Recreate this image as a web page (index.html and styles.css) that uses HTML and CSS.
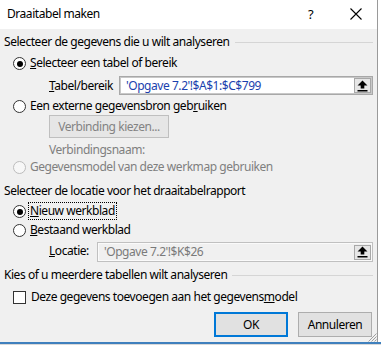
FILE: index.html
```html
<!DOCTYPE html>
<html>
<head>
<meta charset="utf-8">
<link rel="stylesheet" href="styles.css">
</head>
<body>
<div class="dialog">
  <div class="titlebar">
    <span class="title">Draaitabel maken</span>
    <span class="tb-help">?</span>
    <span class="tb-close">
      <svg width="12" height="12" viewBox="0 0 12 12"><path d="M0.5 0.5 L11.5 11.5 M11.5 0.5 L0.5 11.5" stroke="#000" stroke-width="1.1"/></svg>
    </span>
  </div>
  <div class="body">
    <div class="header h1"><span>Selecteer de gegevens die u wilt analyseren</span><span class="rule"></span></div>
    <div class="opt r1"><span class="radio checked"></span><span><u>S</u>electeer een tabel of bereik</span></div>
    <div class="field f1">
      <span class="flabel"><u>T</u>abel/bereik</span>
      <div class="input in1"><span class="val">'Opgave 7.2'!$A$1:$C$799</span><span class="pick"><svg width="11" height="12" viewBox="0 0 11 12"><path d="M5.5 0.5 L10.5 5.5 L7.3 5.5 L7.3 8.5 L3.7 8.5 L3.7 5.5 L0.5 5.5 Z" fill="#000"/><rect x="0.5" y="10" width="10" height="1.5" fill="#000"/></svg></span></div>
    </div>
    <div class="opt r2"><span class="radio"></span><span>Een externe gegevensbron geb<u>r</u>uiken</span></div>
    <div class="btnrow"><span class="btn disabled">Verbinding kiezen...</span></div>
    <div class="sub dis">Verbindingsnaam:</div>
    <div class="opt r3 dis"><span class="radio disabled"></span><span>Gegevensmodel van deze werkmap gebruiken</span></div>
    <div class="header h2"><span>Selecteer de locatie voor het draaitabelrapport</span></div>
    <div class="opt r4"><span class="radio checked"></span><span class="focus"><u>N</u>ieuw werkblad</span></div>
    <div class="opt r5"><span class="radio"></span><span><u>B</u>estaand werkblad</span></div>
    <div class="field f2">
      <span class="flabel"><u>L</u>ocatie:</span>
      <div class="input in2 disabled"><span class="val">'Opgave 7.2'!$K$26</span><span class="pick"><svg width="11" height="12" viewBox="0 0 11 12"><path d="M5.5 0.5 L10.5 5.5 L7.3 5.5 L7.3 8.5 L3.7 8.5 L3.7 5.5 L0.5 5.5 Z" fill="#000"/><rect x="0.5" y="10" width="10" height="1.5" fill="#000"/></svg></span></div>
    </div>
    <div class="header h3"><span>Kies of u meerdere tabellen wilt analyseren</span><span class="rule"></span></div>
    <div class="opt r6"><span class="check"></span><span>Deze gegevens toevoegen aan het gegevens<u>m</u>odel</span></div>
    <div class="actions">
      <span class="btn primary">OK</span>
      <span class="btn">Annuleren</span>
    </div>
  </div>
  <div class="grip"><svg width="9" height="9" viewBox="0 0 9 9"><path d="M8.5 0.5 L0.5 8.5 M8.5 3.5 L3.5 8.5 M8.5 6.5 L6.5 8.5" stroke="#a0a0a0" stroke-width="1"/></svg></div>
</div>
<div class="taskbar"></div>
</body>
</html>
```
FILE: styles.css
```css
html, body {
  margin: 0;
  padding: 0;
  background: #ffffff;
  width: 381px;
  height: 345px;
  overflow: hidden;
}
body {
  font-family: "Noto Sans", "Open Sans", sans-serif;
  font-size: 12px;
  line-height: 16px;
  letter-spacing: -0.45px;
  color: #000;
}
.dialog {
  position: relative;
  width: 377px;
  height: 342px;
  background: #f0f0f0;
  border-right: 1px solid #9a9a9a;
  display: flex;
  flex-direction: column;
}
.titlebar {
  height: 29px;
  background: #fff;
  display: flex;
  align-items: center;
  padding-left: 7px;
}
.title { flex: 1; margin-top: -2px; }
.tb-help { width: 12px; margin-right: 30px; font-size: 13px; margin-top: -2px; }
.tb-close { width: 12px; margin-right: 15px; display: flex; margin-top: -1px; }

.body {
  display: flex;
  flex-direction: column;
  padding-left: 4px;
  padding-right: 4px;
}
.header {
  display: flex;
  align-items: center;
  height: 16px;
}
.header .rule {
  flex: 1;
  height: 1px;
  background: #d5d5d5;
  margin-left: 5px;
}
.h1 { margin-top: 5px; }
.opt {
  display: flex;
  align-items: center;
  height: 16px;
  padding-left: 9px;
}
.r1 { margin-top: 5px; }
.radio {
  width: 11px;
  height: 11px;
  border: 1px solid #333;
  border-radius: 50%;
  background: #fff;
  margin-right: 4px;
  margin-top: 1px;
  position: relative;
  flex: none;
}
.radio.checked::after {
  content: "";
  position: absolute;
  left: 2.5px;
  top: 2.5px;
  width: 6px;
  height: 6px;
  border-radius: 50%;
  background: #000;
}
.radio.disabled { border-color: #bcbcbc; background: #f7f7f7; }
.dis { color: #7f7f7f; }
.field {
  display: flex;
  align-items: center;
  padding-left: 45px;
}
.f1 { margin-top: 5px; height: 19px; }
.f1 .flabel { width: 70px; }
.f2 { margin-top: 4px; height: 20px; }
.f2 .flabel { width: 48px; padding-bottom: 3px; }
.input {
  flex: 1;
  align-self: stretch;
  box-sizing: border-box;
  border: 1px solid #a8a8a8;
  box-shadow: inset 0 0 0 1px #c8c8c8;
  background: #fff;
  display: flex;
  align-items: center;
  justify-content: space-between;
  padding-left: 6px;
}
.val { color: #1a3fae; }
.input.disabled { background: #f0f0f0; box-shadow: inset 0 0 0 1px #fafafa; border-color: #c0c0c0; }
.input.disabled .val { color: #7a7a7a; }
.pick {
  width: 17px;
  height: 15px;
  box-sizing: border-box;
  background: #e6e6e6;
  border: 1px solid #a8a8a8;
  display: flex;
  align-items: center;
  justify-content: center;
  margin-right: 1px;
}
.r2 { margin-top: 3px; }
.btnrow { padding-left: 45px; margin-top: 1px; display: flex; }
.btn {
  display: flex;
  align-items: center;
  justify-content: center;
  box-sizing: border-box;
  border: 1px solid #adadad;
  background: #e1e1e1;
}
.btnrow .btn { width: 120px; height: 23px; }
.btn.disabled { background: #e6e6e6; border-color: #bfbfbf; color: #838383; }
.sub { padding-left: 45px; margin-top: 4px; height: 16px; }
.r3 { margin-top: 1px; }
.h2 { margin-top: 8px; }
.r4 { margin-top: 4px; }
.focus { outline: 1px dotted #000; outline-offset: 0px; padding: 0 1px; margin-left: -1px; }
.r5 { margin-top: 3px; }
.h3 { margin-top: 5px; }
.r6 { margin-top: 6px; }
.check {
  width: 11px;
  height: 11px;
  border: 1px solid #333;
  background: #fff;
  margin-right: 5px;
  margin-top: 1px;
  flex: none;
}
.actions {
  display: flex;
  justify-content: flex-end;
  gap: 10px;
  margin-top: 7px;
  padding-right: 1px;
}
.actions .btn { width: 74px; height: 25px; }
.btn.primary { border: 2px solid #0078d7; }
.grip { position: absolute; right: 0; bottom: 0; width: 9px; height: 9px; display: flex; }
.taskbar {
  height: 2px;
  width: 381px;
  background: #3f80bd;
  border-bottom: 1px solid #d9d9d9;
}
```
